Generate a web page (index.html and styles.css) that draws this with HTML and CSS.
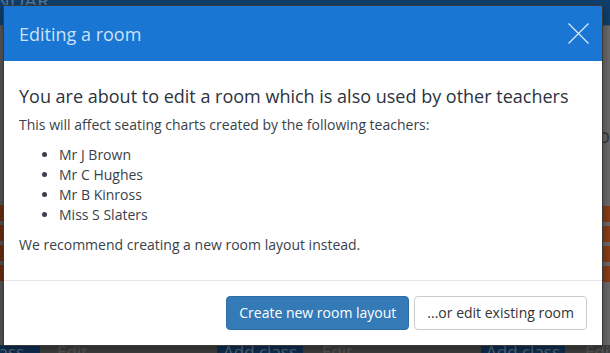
FILE: index.html
```html
<!DOCTYPE html>
<html>
<head>
<meta charset="utf-8">
<link rel="stylesheet" href="styles.css">
</head>
<body>
<div class="page">
  <div class="topbar"><span class="topbar-title">CALENDAR</span></div>
  <div class="middle">
    <div class="side side-left">
      <div class="stripe"></div><div class="stripe"></div><div class="stripe"></div><div class="stripe"></div>
    </div>
    <div class="side side-right">
      <div class="side-text">or</div>
      <div class="stripe"></div><div class="stripe"></div><div class="stripe"></div><div class="stripe"></div>
    </div>
  </div>
  <div class="bottombar">
    <span class="bg-btn bg-btn-a">class</span><span class="bg-link bg-link-a">Edit</span>
    <span class="bg-btn bg-btn-b">Add class</span><span class="bg-link bg-link-b">Edit</span>
    <span class="bg-btn bg-btn-c">Add class</span><span class="bg-link">Edit</span>
  </div>
</div>

<div class="modal">
  <div class="modal-header">
    <h4 class="modal-title">Editing a room</h4>
    <button class="close" aria-label="Close">
      <svg width="21" height="21" viewBox="0 0 21 21"><path d="M0.5 0.5 L20.5 20.5 M20.5 0.5 L0.5 20.5" stroke="#e3eefa" stroke-width="1.1" fill="none"/></svg>
    </button>
  </div>
  <div class="modal-body">
    <h4 class="heading">You are about to edit a room which is also used by other teachers</h4>
    <p>This will affect seating charts created by the following teachers:</p>
    <ul>
      <li>Mr J Brown</li>
      <li>Mr C Hughes</li>
      <li>Mr B Kinross</li>
      <li>Miss S Slaters</li>
    </ul>
    <p>We recommend creating a new room layout instead.</p>
  </div>
  <div class="modal-footer">
    <button class="btn btn-primary">Create new room layout</button>
    <button class="btn btn-default">...or edit existing room</button>
  </div>
</div>
</body>
</html>
```
FILE: styles.css
```css
* { box-sizing: border-box; }
html, body { margin: 0; padding: 0; }
body {
  width: 610px;
  height: 353px;
  overflow: hidden;
  font-family: "Open Sans", "Liberation Sans", sans-serif;
  font-size: 14px;
  line-height: 20px;
  color: #333;
  background: #5e5e5e;
  position: relative;
}
.page {
  height: 353px;
  display: flex;
  flex-direction: column;
}
.topbar {
  height: 25px;
  background: #0f3f6d;
  overflow: hidden;
  flex: none;
}
.topbar-title {
  display: block;
  margin-left: -52px;
  margin-top: -9px;
  font-size: 20px;
  color: #5b7793;
  line-height: 20px;
}
.middle {
  flex: 1;
  display: flex;
  justify-content: space-between;
}
.side {
  width: 10px;
  display: flex;
  flex-direction: column;
  background: #5a5a5a;
  border-top: 1px solid #525252;
}
.side-left { background: #575757; padding-top: 179px; }
.side-right { background: #6a6a6a; width: 10px; padding-top: 100px; }
.side-text {
  font-size: 20px;
  color: #2a3846;
  margin-left: -2px;
  height: 80px;
}
.stripe {
  height: 16px;
  margin-bottom: 4px;
  background: #6b2e10;
}
.side-right .stripe { background: #8a3d16; }
.bottombar {
  height: 8px;
  flex: none;
  display: flex;
  align-items: flex-start;
  background: #404040;
  overflow: hidden;
  font-size: 17px;
  line-height: 14px;
  white-space: nowrap;
}
.bg-btn {
  flex: none;
  background: #0f2f52;
  color: #56697d;
  padding: 0 12px;
  height: 8px;
  white-space: nowrap;
}
.bg-link {
  flex: none;
  color: #585858;
  padding: 0 10px 0 20px;
  height: 8px;
  white-space: nowrap;
}
.bg-btn-a { width: 40px; padding-left: 0; text-indent: -14px; }
.bg-link-a { width: 177px; padding-left: 17px; }
.bg-btn-b { width: 86px; padding: 0 6px; }
.bg-link-b { width: 178px; padding-left: 19px; }
.bg-btn-c { width: 84px; padding: 0 5px; }

.modal {
  position: absolute;
  left: 3px;
  top: 5px;
  width: 600px;
  background: #fff;
  border: 1px solid #3a3a3a;
  box-shadow: 0 3px 9px rgba(0,0,0,0.4);
}
.modal-header {
  background: #1976d2;
  height: 55px;
  padding: 0 15px;
  display: flex;
  align-items: center;
  justify-content: space-between;
}
.modal-title {
  margin: 0;
  font-size: 18px;
  font-weight: 400;
  color: #cde2f6;
  line-height: 22px;
  padding-top: 1px;
}
.close {
  border: 0;
  background: none;
  padding: 0;
  margin: 0 -2px 1px 0;
  width: 21px;
  height: 21px;
  display: block;
}
.close svg { display: block; }
.modal-body {
  padding: 15px;
}
.heading {
  margin: 10px 0 9px;
  font-size: 18px;
  font-weight: 400;
  line-height: 20px;
  color: #2b3340;
  white-space: nowrap;
}
p {
  margin: 0 0 10px;
  color: #3a3f4a;
}
ul {
  margin: 0 0 10px;
  padding-left: 40px;
  color: #3a3f4a;
}
.modal-footer {
  border-top: 1px solid #e5e5e5;
  padding: 15px;
  display: flex;
  justify-content: flex-end;
  gap: 5px;
}
.btn {
  font-family: inherit;
  font-size: 14px;
  line-height: 20px;
  height: 34px;
  padding: 6px 12px;
  border-radius: 4px;
  border: 1px solid transparent;
}
.btn-primary {
  background: #337ab7;
  border-color: #2e6da4;
  color: #fff;
}
.btn-default {
  background: #fff;
  border-color: #ccc;
  color: #333;
}
```
